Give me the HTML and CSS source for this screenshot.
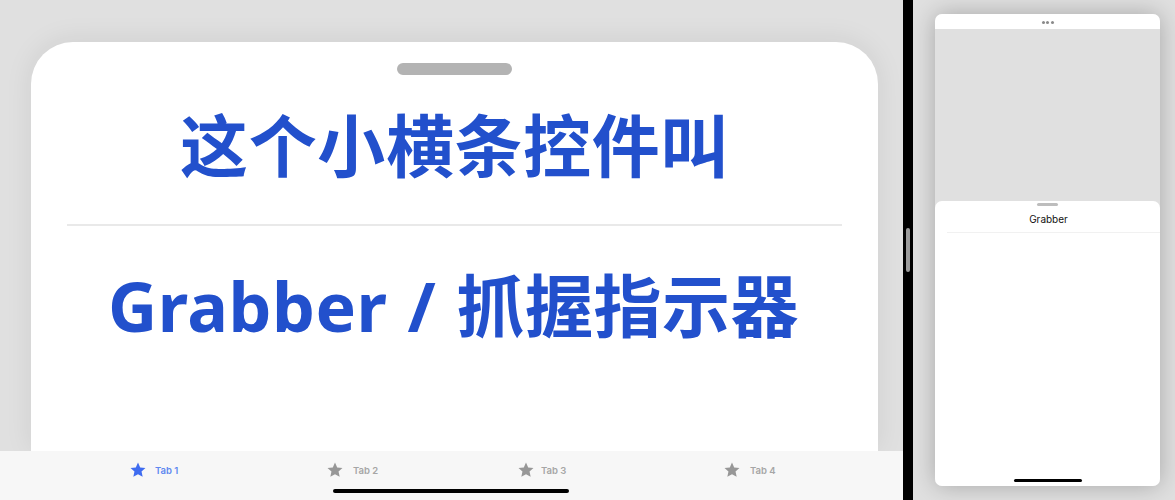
FILE: index.html
```html
<!DOCTYPE html>
<html lang="zh">
<head>
<meta charset="utf-8">
<title>Grabber</title>
<link rel="stylesheet" href="styles.css">
</head>
<body>
<div class="app">
  <main class="main">
    <section class="card">
      <div class="card-grabber"></div>
      <h1 class="headline first">这个小横条控件叫</h1>
      <div class="card-rule"></div>
      <h1 class="headline second">Grabber / 抓握指示器</h1>
    </section>
    <nav class="tabbar">
      <div class="tab tab-1 active"><svg class="star" viewBox="0 0 24 24"><path d="M12 .8l3.3 7.3 7.9.9-5.9 5.3 1.7 7.9L12 18.2 5 22.2l1.7-7.9L.8 9l7.9-.9z"/></svg><span>Tab 1</span></div>
      <div class="tab tab-2"><svg class="star" viewBox="0 0 24 24"><path d="M12 .8l3.3 7.3 7.9.9-5.9 5.3 1.7 7.9L12 18.2 5 22.2l1.7-7.9L.8 9l7.9-.9z"/></svg><span>Tab 2</span></div>
      <div class="tab tab-3"><svg class="star" viewBox="0 0 24 24"><path d="M12 .8l3.3 7.3 7.9.9-5.9 5.3 1.7 7.9L12 18.2 5 22.2l1.7-7.9L.8 9l7.9-.9z"/></svg><span>Tab 3</span></div>
      <div class="tab tab-4"><svg class="star" viewBox="0 0 24 24"><path d="M12 .8l3.3 7.3 7.9.9-5.9 5.3 1.7 7.9L12 18.2 5 22.2l1.7-7.9L.8 9l7.9-.9z"/></svg><span>Tab 4</span></div>
      <div class="home-bar"></div>
    </nav>
  </main>
  <div class="divider"><div class="divider-handle"></div></div>
  <aside class="side">
    <div class="phone">
      <div class="phone-top"><i></i><i></i><i></i></div>
      <div class="phone-back"></div>
      <div class="sheet">
        <div class="sheet-grabber"></div>
        <div class="sheet-title">Grabber</div>
        <div class="sheet-rule"></div>
        <div class="sheet-body"></div>
        <div class="sheet-home"></div>
      </div>
    </div>
  </aside>
</div>
</body>
</html>
```
FILE: styles.css
```css
* { box-sizing: border-box; }
html, body { margin: 0; height: 100%; overflow: hidden; }
body { font-family: Inter, "Liberation Sans", "Noto Sans CJK SC", sans-serif; background: #e0e0e0; }
.app { display: flex; width: 1175px; height: 500px; }

.main { width: 903px; display: flex; flex-direction: column; background: #e0e0e0; position: relative; }
.card {
  margin: 42px 25px 0 31px;
  flex: 1;
  background: #fff;
  border-radius: 42px 42px 0 0;
  box-shadow: 0 -2px 28px rgba(0,0,0,.08);
  display: flex;
  flex-direction: column;
  align-items: center;
  padding-top: 21px;
}
.card-grabber { width: 115px; height: 12px; border-radius: 6px; background: #b3b3b3; }
.headline {
  margin: 0;
  font-family: "Noto Sans", "Noto Sans CJK SC", sans-serif;
  font-weight: 700;
  font-size: 68px;
  line-height: 100px;
  color: #2250cc;
  white-space: nowrap;
}
.first { margin-top: 21px; height: 100px; letter-spacing: .6px; }
.card-rule { width: 775px; height: 2px; background: #e9e9e9; margin-top: 28px; }
.second { margin-top: 30px; letter-spacing: .5px; word-spacing: 2px; padding-right: 2px; }

.tabbar { height: 49px; background: #f7f7f7; position: relative; display: block; z-index: 1; }
.tab { position: absolute; top: 10px; display: flex; align-items: center; gap: 10px; height: 18px; font-size: 9.5px; font-weight: 600; color: #a6a6a6; }
.tab .star { width: 16px; height: 16px; fill: #979797; display: block; margin-top: -1px; }
.tab.active { color: #5f88f0; gap: 9px; }
.tab.active .star { fill: #3f6cf0; }
.tab-1 { left: 130px; }
.tab-2 { left: 327px; }
.tab-3 { left: 518px; gap: 7px; }
.tab-4 { left: 724px; }
.home-bar { position: absolute; left: 333px; top: 38px; width: 236px; height: 4px; border-radius: 2px; background: #000; }

.divider { width: 10px; background: #000; display: flex; align-items: center; justify-content: center; }
.divider-handle { width: 4px; height: 44px; border-radius: 2px; background: #9b9b9b; }

.side { flex: 1; background: #e0e0e0; padding: 14px 15px 14px 22px; }
.phone {
  height: 472px;
  border-radius: 7px;
  background: #e0e0e0;
  box-shadow: 0 0 24px rgba(0,0,0,.26);
  display: flex;
  flex-direction: column;
  overflow: hidden;
}
.phone-top { height: 15px; background: #fff; display: flex; justify-content: center; align-items: center; gap: 1.5px; flex: none; padding-top: 1px; }
.phone-top i { width: 3px; height: 3px; border-radius: 50%; background: #8a8a8a; display: block; }
.phone-back { height: 172px; flex: none; }
.sheet {
  flex: 1;
  background: #fff;
  border-radius: 7px 7px 0 0;
  display: flex;
  flex-direction: column;
  align-items: center;
  padding-top: 2px;
}
.sheet-grabber { width: 21px; height: 3px; border-radius: 2px; background: #bdbdbd; flex: none; }
.sheet-title { font-size: 10px; line-height: 12px; color: #111; margin-top: 7px; height: 12px; padding-left: 2px; }
.sheet-rule { align-self: stretch; margin: 7px 0 0 12px; height: 1px; background: #f1f1f1; flex: none; }
.sheet-body { flex: 1; }
.sheet-home { width: 68px; height: 3px; border-radius: 2px; background: #000; margin-bottom: 4px; flex: none; }
```
